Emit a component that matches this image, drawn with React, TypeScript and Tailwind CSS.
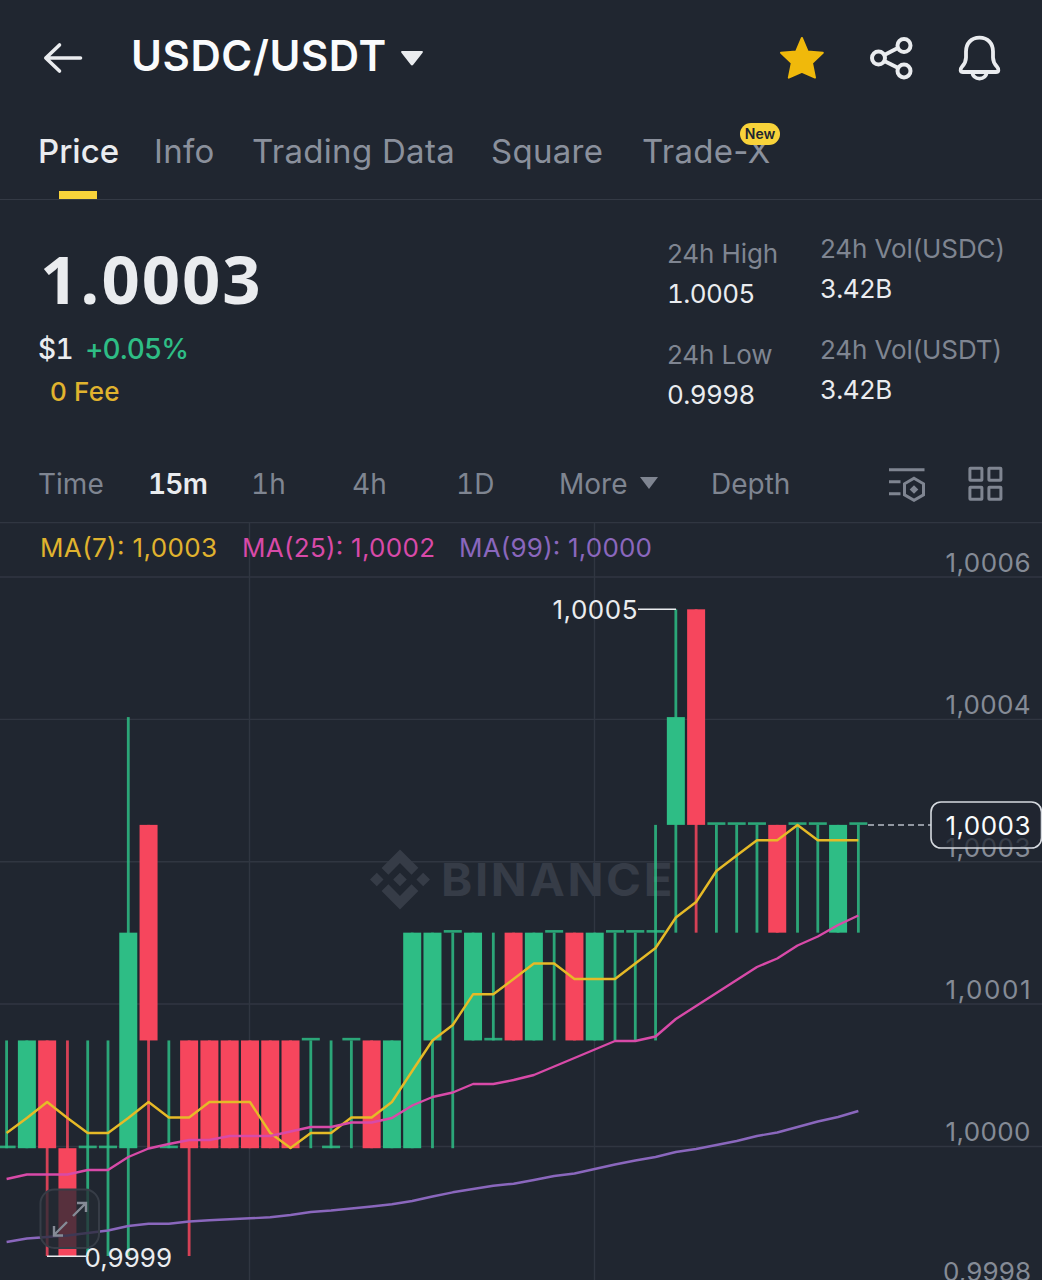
import React from 'react';

const GREEN = '#2ebd85';
const RED = '#f6465d';

const tabs = [
  { label: 'Price', width: 'w-[78px]', active: true },
  { label: 'Info', width: 'w-[60px]' },
  { label: 'Trading Data', width: 'w-[201px]' },
  { label: 'Square', width: 'w-[113px]' },
  { label: 'Trade-X', width: 'w-[127px]', badge: 'New' },
];

const intervals = [
  { label: 'Time', width: 'w-[110px]' },
  { label: '15m', width: 'w-[103px]', active: true },
  { label: '1h', width: 'w-[101px]' },
  { label: '4h', width: 'w-[104px]' },
  { label: '1D', width: 'w-[103px]' },
  { label: 'More', width: 'w-[152px]', menu: true },
  { label: 'Depth', width: 'w-[178px]' },
];

// [direction, open/close low, open/close high, wick low, wick high] in price ticks above 0.9999
const candles: [string, number, number, number, number][] = [
  ['g', 1, 1, 1, 2],
  ['g', 1, 2, 1, 2],
  ['r', 1, 2, 0, 2],
  ['r', 0, 1, 0, 2],
  ['g', 1, 1, 0, 2],
  ['g', 1, 1, 0, 2],
  ['g', 1, 3, 0, 5],
  ['r', 2, 4, 1, 4],
  ['g', 1, 1, 1, 2],
  ['r', 1, 2, 0, 2],
  ['r', 1, 2, 1, 2],
  ['r', 1, 2, 1, 2],
  ['r', 1, 2, 1, 2],
  ['r', 1, 2, 1, 2],
  ['r', 1, 2, 1, 2],
  ['g', 2, 2, 1, 2],
  ['g', 1, 1, 1, 2],
  ['g', 2, 2, 1, 2],
  ['r', 1, 2, 1, 2],
  ['g', 1, 2, 1, 2],
  ['g', 1, 3, 1, 3],
  ['g', 2, 3, 1, 3],
  ['g', 3, 3, 1, 3],
  ['g', 2, 3, 2, 3],
  ['g', 2, 2, 2, 3],
  ['r', 2, 3, 2, 3],
  ['g', 2, 3, 2, 3],
  ['g', 3, 3, 2, 3],
  ['r', 2, 3, 2, 3],
  ['g', 2, 3, 2, 3],
  ['g', 3, 3, 2, 3],
  ['g', 3, 3, 2, 3],
  ['g', 3, 3, 2, 4],
  ['g', 4, 5, 3, 6],
  ['r', 4, 6, 3, 6],
  ['g', 4, 4, 3, 4],
  ['g', 4, 4, 3, 4],
  ['g', 4, 4, 3, 4],
  ['r', 3, 4, 3, 4],
  ['g', 4, 4, 3, 4],
  ['g', 4, 4, 3, 4],
  ['g', 3, 4, 3, 4],
  ['g', 4, 4, 3, 4],
];

const ma7 = [
  1133, 1118, 1102, 1118, 1133, 1133, 1118, 1102, 1117.5, 1117.5, 1102, 1102, 1102, 1133, 1148,
  1133, 1133, 1117.5, 1117.5, 1102, 1071, 1040.5, 1025, 994.3, 994.3, 979, 963.5, 963.5, 979, 979,
  979, 963.5, 948, 917.5, 902, 871, 855.5, 840.3, 840.3, 825, 840.3, 840.3, 840.3,
];
const ma25 = [
  1179, 1174.5, 1174.5, 1174.5, 1170, 1170, 1157, 1148.5, 1144, 1140, 1140, 1136, 1136, 1136, 1131.5,
  1127, 1127, 1122.5, 1122.5, 1118, 1105.5, 1097, 1092.5, 1084, 1084, 1080, 1075, 1066.5, 1058, 1049.5,
  1041, 1041, 1036.5, 1019, 1006, 993, 980, 967, 958.5, 945.5, 936.5, 925, 915.5,
];
const ma99 = [
  1242, 1238.5, 1237, 1235.5, 1233, 1230.5, 1226, 1223.7, 1223.7, 1221.5, 1220.3, 1219.3, 1218.3, 1217.3, 1215,
  1212, 1210.5, 1208.5, 1206.5, 1204.3, 1201, 1196.5, 1192.3, 1189, 1185.7, 1183.7, 1180, 1176, 1173.5, 1169,
  1164.5, 1160.5, 1157, 1152, 1149, 1145, 1141, 1136, 1132.5, 1127, 1121.5, 1117, 1111,
];

const axis = [
  { label: '1,0006', y: 572 },
  { label: '1,0004', y: 714 },
  { label: '1,0003', y: 857 },
  { label: '1,0001', y: 999 },
  { label: '1,0000', y: 1141 },
  { label: '0,9998', y: 1281 },
];

const xAt = (i: number) => 6.6 + i * 20.28;
const yAt = (level: number) => 1256 - level * 107.78;
const toPoints = (values: number[]) => values.map((y, i) => `${xAt(i)},${y}`).join(' ');

const Header = () => (
  <header className="flex h-[111px] items-center">
    <svg className="mt-1 ml-[42px] h-[34px] w-[42px]" viewBox="0 0 42 34" fill="none" stroke="#eaecef" strokeWidth="3.6" strokeLinecap="round" strokeLinejoin="round">
      <path d="M17.5 4 3.8 17l13.700 13M3.800 17h34.700" />
    </svg>
    <h1 className="ml-[47px] w-[270px] text-[42px] font-semibold tracking-[0.6px] whitespace-nowrap text-[#fafbfc]">USDC/USDT</h1>
    <svg className="mt-1 h-[16px] w-[22px]" viewBox="0 0 22 16" fill="#eaecef">
      <path d="M1.200 1h19.600c1 0 1.400 1 .8 1.700L12.200 14.800c-.7.800-1.700.800-2.400 0L.4 2.700C-.2 2 .2 1 1.200 1Z" />
    </svg>
    <svg className="mt-[5px] ml-[356px] h-[44px] w-[46px]" viewBox="0 0 46 44" fill="#f0b90b" stroke="#f0b90b" strokeWidth="2" strokeLinejoin="round">
      <path d="M22.900 2 28.600 15.500 43.800 16.800 33 27 36 41.600 22.900 35.800 9.800 41.600 12.800 27 2 16.800 17.200 15.500Z" />
    </svg>
    <svg className="mt-1 ml-[45px] h-[44px] w-[44px]" viewBox="0 0 44 44" fill="none" stroke="#eaecef" strokeWidth="4">
      <circle cx="8.500" cy="22" r="6.500" />
      <circle cx="34" cy="9.500" r="6.500" />
      <circle cx="34" cy="34.900" r="6.500" />
      <path d="m14.300 19 14-7.200M14.300 25l14 7" />
    </svg>
    <svg className="mt-1 ml-[44px] h-[46px] w-[44px]" viewBox="0 0 44 46" fill="none" stroke="#eaecef" strokeWidth="3.800" strokeLinejoin="round">
      <path d="M21.500 2.600c-8.500 0-13.500 6-13.500 14v6c0 4-1.500 6.500-4 9.200-2.200 2.500-1.700 5.200 1 5.200h33c2.700 0 3.200-2.700 1-5.200-2.500-2.700-4-5.200-4-9.200v-6c0-8-5-14-13.500-14Z" />
      <path d="M14 37c.8 4 3.600 6.600 7.500 6.600s6.700-2.600 7.500-6.600" />
    </svg>
  </header>
);

const Tabs = () => (
  <nav className="flex h-[89px] items-start gap-[38px] border-b border-[#343a45] pl-[38px]">
    {tabs.map(tab => (
      <div key={tab.label} className={`relative flex flex-col items-center ${tab.width}`}>
        <span className={`h-20 w-full text-[33px] leading-[81px] whitespace-nowrap ${tab.active ? 'font-medium text-[#eaecef]' : 'tracking-[0.3px] text-[#8a909c]'}`}>{tab.label}</span>
        {tab.active && <span className="ml-px h-2 w-[38px] bg-[#f8d33a]" />}
        {tab.badge && (
          <span className="absolute top-3 left-[98px] h-[22px] w-[40px] rounded-full bg-[#f8d33a] text-center text-[14px] leading-[22px] font-semibold text-[#202630]">{tab.badge}</span>
        )}
      </div>
    ))}
  </nav>
);

const Stat = ({ label, value }: { label: string; value: string }) => (
  <div className="text-[26px] whitespace-nowrap">
    <p className="leading-10 tracking-[-0.1px] text-[#7f8591]">{label}</p>
    <p className="leading-10 tracking-[-0.6px] text-[#eaecef] tabular-nums">{value}</p>
  </div>
);

const Summary = () => (
  <section className="flex h-[245px]">
    <div className="w-[667px] pt-[30px] pl-[38px]">
      <p className="h-[99px] pl-0.5 font-['Open_Sans','Liberation_Sans',sans-serif] text-[67px] leading-[96px] font-bold tracking-[2px] text-[#eaecef]">1.0003</p>
      <p className="flex gap-3 text-[28px] leading-[41px] font-medium tabular-nums">
        <span className="tracking-[-0.5px] text-[#eaecef]">$1</span>
        <span className="tracking-[-0.8px] text-[#2ebd85]">+0.05%</span>
      </p>
      <p className="pl-3 text-[26px] leading-[43px] font-medium tracking-[0.2px] text-[#e0b32e]">0 Fee</p>
    </div>
    <div className="flex w-[153px] flex-col gap-[21px] pt-[34px]">
      <Stat label="24h High" value="1.0005" />
      <Stat label="24h Low" value="0.9998" />
    </div>
    <div className="flex flex-col gap-[21px] pt-[29px]">
      <Stat label="24h Vol(USDC)" value="3.42B" />
      <Stat label="24h Vol(USDT)" value="3.42B" />
    </div>
  </section>
);

const Intervals = () => (
  <div className="flex h-[77px] items-center pl-[38px] text-[28px] text-[#7f8591]">
    {intervals.map(item => (
      <div key={item.label} className={`flex items-center tabular-nums ${item.width} ${item.active ? 'font-semibold tracking-[-0.8px] text-[#eaecef]' : ''}`}>
        {item.label}
        {item.menu && (
          <svg className="ml-3 h-[14px] w-5" viewBox="0 0 20 14" fill="#7f8591">
            <path d="M1 0h18L10 12Z" />
          </svg>
        )}
      </div>
    ))}
    <svg className="h-[36px] w-[37px]" viewBox="0 0 37 36" fill="none" stroke="#7f8591" strokeWidth="3">
      <path d="M0 3.800h35.500M0 15.800h11.500M0 27.800h11.500" />
      <path d="m25 12.300 9.500 5.500v11L25 34.300l-9.500-5.500v-11Z" />
      <path d="m25 19.200 4.300 4.300-4.300 4.300-4.300-4.300Z" fill="#7f8591" stroke="none" />
    </svg>
    <svg className="ml-[41px] h-[36px] w-[36px]" viewBox="0 0 36 36" fill="none" stroke="#7f8591" strokeWidth="3">
      <rect x="2.900" y="2.200" width="12" height="12" rx="0.500" />
      <rect x="21.900" y="2.200" width="12" height="12" rx="0.500" />
      <rect x="2.900" y="21.200" width="12" height="12" rx="0.500" />
      <rect x="21.900" y="21.200" width="12" height="12" rx="0.500" />
    </svg>
  </div>
);

const Candle = ({ index, data }: { index: number; data: [string, number, number, number, number] }) => {
  const [dir, low, high, wickLow, wickHigh] = data;
  const color = dir === 'g' ? GREEN : RED;
  const x = xAt(index);
  return (
    <g fill={color}>
      <rect x={x - 1.4} y={yAt(wickHigh)} width="2.8" height={yAt(wickLow) - yAt(wickHigh)} opacity="0.85" />
      {low === high ? (
        <rect x={x - 9} y={yAt(low) - 2.6} width="18" height="2.6" opacity="0.85" />
      ) : (
        <rect x={x - 9} y={yAt(high)} width="18" height={yAt(low) - yAt(high)} />
      )}
    </g>
  );
};

const Chart = () => (
  <svg className="h-[758px] w-full" viewBox="0 522 1042 758" fontSize="26">
    <g stroke="#303641" strokeWidth="1.4">
      <path d="M0 522.500H1042M0 577H1042M0 719.400H1042M0 861.800H1042M0 1004H1042M0 1146.500H1042" />
      <path d="M249.500 522V1280M594.500 522V1280" />
    </g>

    <g fill="#363c47">
      <path transform="translate(370 849.500) scale(2.5)" d="M16.624 13.920l2.718 2.715-7.354 7.353-7.353-7.352 2.718-2.716 4.635 4.660 4.636-4.660zm4.637-4.636L24 12l-2.715 2.716L18.568 12l2.693-2.716zm-9.273 0l2.717 2.692-2.717 2.717L9.272 12l2.716-2.716zm-9.272 0L5.409 12l-2.692 2.692L0 12l2.716-2.716zM11.988.012l7.354 7.329-2.718 2.715-4.636-4.636-4.635 4.660-2.718-2.716 7.353-7.352z" />
      <text x="441" y="896" fontSize="45.500" fontWeight="700" letterSpacing="2.5" textLength="234" lengthAdjust="spacingAndGlyphs">BINANCE</text>
    </g>

    <g fill="#858b96">
      {axis.map(a => (
        <text key={a.label} x={a.label[0] === '0' ? 943 : 945.5} y={a.y} textLength={a.label[0] === '0' ? 88 : 85}>{a.label}</text>
      ))}
    </g>

    {candles.map((c, i) => <Candle key={i} index={i} data={c} />)}

    <g fill="none" strokeWidth="2.4" strokeLinejoin="round">
      <polyline points={toPoints(ma99)} stroke="#8a67bd" />
      <polyline points={toPoints(ma7)} stroke="#e6ba27" />
      <polyline points={toPoints(ma25)} stroke="#d84aa8" />
    </g>

    <text x="40" y="556.500" fill="#e0b32e" textLength="177">MA(7): 1,0003</text>
    <text x="242" y="556.500" fill="#d84aa8" textLength="193">MA(25): 1,0002</text>
    <text x="459" y="556.500" fill="#8a67bd" textLength="193">MA(99): 1,0000</text>

    {/* expand button */}
    <rect x="40.500" y="1189.500" width="58.500" height="58.500" rx="14" fill="#252a33" fillOpacity="0.76" stroke="#373d47" strokeWidth="2" />
    <path d="M73 1216 85.500 1203.500M77 1203H86V1212M67 1222 54.500 1234.500M54 1226V1235.500H63" fill="none" stroke="#858b96" strokeWidth="2.400" />

    {/* high and low markers */}
    <g stroke="#eaecef" strokeWidth="1.6">
      <path d="M638 609.300H676M47 1256.300H86" />
    </g>
    <text x="552.500" y="619" fill="#eaecef" textLength="85">1,0005</text>
    <text x="84.500" y="1266.500" fill="#eaecef" textLength="87.500">0,9999</text>

    {/* last price */}
    <path d="M868 825H931" stroke="#b7bdc6" strokeWidth="1.6" strokeDasharray="6 4" />
    <rect x="931" y="802" width="110.500" height="46" rx="10" fill="#202630" fillOpacity="0.75" stroke="#d5d9df" strokeWidth="1.6" />
    <text x="945.500" y="835" fill="#fafbfc" textLength="85">1,0003</text>
  </svg>
);

const App = () => {
  return (
    <div className="h-[1280px] w-[1042px] overflow-hidden bg-[#202630] font-['Inter','Liberation_Sans',sans-serif]">
      <Header />
      <Tabs />
      <Summary />
      <Intervals />
      <Chart />
    </div>
  );
};

export default App;
